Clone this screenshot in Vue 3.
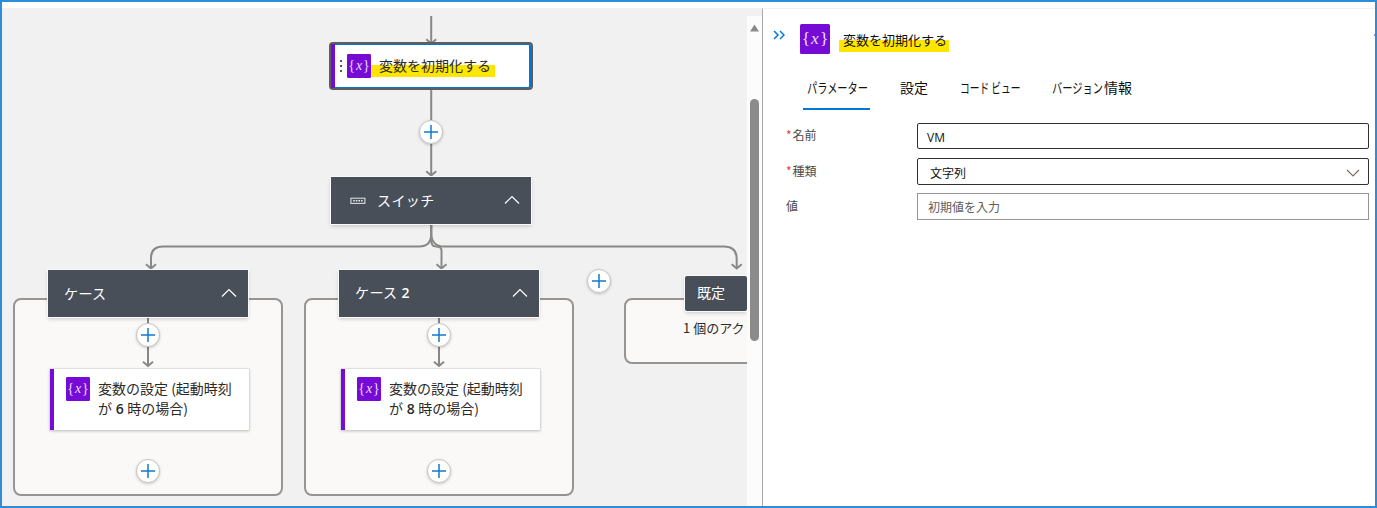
<script setup>
const containers = [
  { x: 13, y: 298, w: 270, h: 198 },
  { x: 304, y: 298, w: 270, h: 198 },
  { x: 624, y: 298, w: 240, h: 66 },
]
const headers = [
  { x: 331, y: 177, w: 200, h: 47, label: 'スイッチ', icon: true },
  { x: 48, y: 270, w: 200, h: 47, label: 'ケース' },
  { x: 339, y: 270, w: 200, h: 47, label: 'ケース', num: '2' },
]
const actions = [
  { x: 50, hour: '6' },
  { x: 341, hour: '8' },
]
const pluses = [[431, 132], [148, 335], [148, 471], [439, 335], [439, 471], [599, 281]]
const edges = [
  'M431.2 16V43', 'M431.2 90V175',
  'M431.2 224V234Q431.2 246.5 419 246.5H163Q151 246.5 151 258V268',
  'M431.2 224V240Q431.2 246.5 436 246.5Q441.5 246.5 441.5 250V268',
  'M431.2 224V234Q432 246.5 444 246.5H724Q736.7 246.5 736.7 259V268',
  'M148 317V365', 'M439 317V365',
]
const heads = [[431.2, 43.5], [431.2, 175.5], [151, 268.5], [441.5, 268.5], [736.7, 268.5], [148, 366], [439, 366]]
const place = (x, y, w, h) => ({ left: `${x - 2}px`, top: `${y - 8}px`, width: `${w}px`, height: `${h}px` })
</script>

<template>
  <div class="frame">
    <div class="strip"></div>
    <div class="body">
      <section class="canvas">
        <div v-for="(c, i) in containers" :key="'c' + i" class="group" :style="place(c.x, c.y, c.w, c.h)"></div>
        <svg class="edges" width="745" height="498" viewBox="2 8 745 498" fill="none" stroke="#898886" stroke-width="2">
          <path v-for="d in edges" :key="d" :d="d" />
          <path v-for="(h, i) in heads" :key="i" :d="`M${h[0] - 5} ${h[1] - 4.3}L${h[0]} ${h[1]}L${h[0] + 5} ${h[1] - 4.3}`" />
        </svg>

        <div class="card selected" :style="place(329, 42, 204, 48)">
          <i class="bar"></i>
          <svg class="grip" width="4" height="14" viewBox="0 0 4 14" fill="#555"><path d="M1 1h2v2H1zM1 6h2v2H1zM1 11h2v2H1z" /></svg>
          <svg class="var" width="24" height="24" viewBox="0 0 30 30"><rect width="30" height="30" rx="1.5" fill="#770bd6" /><text x="15" y="20" text-anchor="middle" class="vx">{<tspan class="ix" dx="1">x</tspan><tspan dx="1">}</tspan></text></svg>
          <span class="hl">変数を初期化する</span>
        </div>

        <div v-for="h in headers" :key="h.x" class="head" :style="place(h.x, h.y, h.w, h.h)">
          <svg v-if="h.icon" class="switch" width="16" height="8" viewBox="0 0 16 8"><rect x=".9" y="1.2" width="14" height="5.2" fill="none" stroke="#d9dbde" stroke-width="1.1" /><path d="M3.2 3.8h9.8" stroke="#e8e9eb" stroke-width="1.5" stroke-dasharray="1.6 1" /></svg>
          <span class="name" :class="{ wide: h.icon }">{{ h.label }}<b v-if="h.num">&nbsp;{{ h.num }}</b></span>
          <svg class="chev" width="16" height="10" viewBox="0 0 16 10" fill="none" stroke="#fff" stroke-width="1.2"><path d="M1 8.5L8 1.5L15 8.5" /></svg>
        </div>
        <div class="head mini" :style="place(685, 276, 62, 35)"><span>既定</span></div>
        <div class="count" :style="place(683, 318, 64, 20)">1 個のアク</div>

        <div v-for="a in actions" :key="a.x" class="card" :style="place(a.x, 369, 199, 61)">
          <i class="bar"></i>
          <svg class="var" width="24" height="24" viewBox="0 0 30 30"><rect width="30" height="30" rx="1.5" fill="#770bd6" /><text x="15" y="20" text-anchor="middle" class="vx">{<tspan class="ix" dx="1">x</tspan><tspan dx="1">}</tspan></text></svg>
          <p>変数の設定 (起動時刻<br>が <b>{{ a.hour }}</b> 時の場合)</p>
        </div>

        <div v-for="(p, i) in pluses" :key="'p' + i" class="plus" :style="place(p[0] - 12, p[1] - 12, 24, 24)">
          <svg width="14" height="14" viewBox="0 0 14 14" stroke="#1179cf" stroke-width="1.5"><path d="M7 0V14M0 7H14" /></svg>
        </div>
      </section>

      <div class="scroll">
        <svg class="up" width="9" height="8" viewBox="0 0 9 8"><path d="M4.5 0.5L9 7.5H0z" fill="#8a8a8a" /></svg>
        <div class="thumb"></div>
      </div>

      <aside class="panel">
        <header>
          <svg class="collapse" width="12" height="10" viewBox="0 0 12 10" fill="none" stroke="#0078d4" stroke-width="1.5"><path d="M1 1L5 5L1 9M7 1L11 5L7 9" /></svg>
          <svg class="logo" width="30" height="30" viewBox="0 0 30 30"><rect width="30" height="30" rx="1.5" fill="#770bd6" /><text x="15" y="20" text-anchor="middle" class="vx">{<tspan class="ix" dx="1">x</tspan><tspan dx="1">}</tspan></text></svg>
          <h1>変数を初期化する</h1>
          <i class="speck"></i>
        </header>
        <nav>
          <a class="on t1"><span class="k">パラメーター</span></a>
          <a class="t2">設定</a>
          <a class="t3"><span class="k">コード ビュー</span></a>
          <a class="t4"><span class="k">バージョン</span>情報</a>
        </nav>
        <form>
          <label class="first"><em>*</em>名前</label><div class="field vm">VM</div>
          <label><em>*</em>種類</label>
          <div class="field sel">文字列<svg width="14" height="8" viewBox="0 0 14 8" fill="none" stroke="#80695c" stroke-width="1.1"><path d="M1 1L7 7L13 1" /></svg></div>
          <label>値</label><div class="field hint">初期値を入力</div>
        </form>
      </aside>
    </div>
  </div>
</template>

<style>
body { margin: 0; background: #fff; }
</style>

<style scoped>
* { box-sizing: border-box; }
.frame { width: 1377px; height: 508px; border: 2px solid #2f8dd8; overflow: hidden; font-family: "Noto Sans CJK JP", "Noto Sans", sans-serif; font-size: 14px; color: #2b2a29; display: flex; flex-direction: column; background: #fff; }
.strip { height: 6px; flex: none; }
.body { flex: 1; display: grid; grid-template-columns: 745px 15px 1fr; min-height: 0; }
.canvas { position: relative; overflow: hidden; background: #f1f1f1; }
.edges { position: absolute; left: 0; top: 0; }
.group { position: absolute; border: 2px solid #969593; border-radius: 8px; background: #faf9f8; }
.head { position: absolute; display: flex; align-items: center; background: #484f59; color: #fff; box-shadow: 0 0 0 1px #fafafa, 0 2px 4px rgba(0,0,0,.2); line-height: 20px; }
.name { flex: 1; padding-left: 16px; padding-bottom: 2px; letter-spacing: .4px; }
.name.wide { padding-left: 11px; }
.switch { margin-left: 19px; }
.chev { margin-right: 11px; margin-bottom: 2px; }
.mini { padding: 0 0 3px 12px; border-radius: 2px; }
.count { position: absolute; white-space: nowrap; font-size: 13px; line-height: 20px; }
.card { position: absolute; display: flex; align-items: flex-start; background: #fff; box-shadow: 0 0 0 .5px #d0cfce, 0 1px 3px rgba(0,0,0,.25); }
.bar { align-self: stretch; width: 4px; background: #770bd6; flex: none; }
.card .var { margin: 8px 8px 0 12px; flex: none; }
.card p { margin: 9px 0 0; line-height: 20px; white-space: nowrap; }
b { font-family: "Open Sans", sans-serif; font-weight: 600; }
p b { margin: 0 .5px; }
.card.selected { align-items: center; border: 2px solid #605e5c; border-radius: 4px; box-shadow: inset 0 1px #0078d4, inset 0 -1px #0078d4, inset -2px 0 #0078d4; }
.card.selected .var { margin: 0; }
.grip { margin: 0 4px; width: 4px; flex: none; }
.hl { height: 24px; line-height: 22px; padding: 0 4px 0 8px; background: linear-gradient(#0000 11px, #ffe600 11px, #ffe600 23px, #0000 23px); white-space: nowrap; }
.vx { font-family: "Liberation Serif", serif; font-size: 17.5px; fill: #ecdcfa; }
.ix { font-style: italic; }
.plus { position: absolute; display: grid; place-items: center; background: #fff; border: 1px solid #c8c6c4; border-radius: 50%; box-shadow: 0 1px 3px rgba(0,0,0,.2); }
.scroll { background: #fcfcfc; border-top: 8px solid #f1f1f1; }
.up { display: block; margin: 8px 0 0 3px; }
.thumb { width: 9px; height: 242px; margin: 67px 0 0 3px; border-radius: 5px; background: #8b8b8b; }
.panel { border-left: 1px solid #a9a9a9; border-top: 1px solid #f1f1f1; background: #fff; color: #111; }
header { display: flex; height: 60px; padding: 15px 0 0 10px; }
.collapse { margin-top: 6px; }
.logo { margin-left: 15px; }
h1 { margin: 5px 0 0 9px; padding: 0 4px; height: 24px; font-size: 13px; font-weight: 400; line-height: 22px; width: 110px; white-space: nowrap; background: linear-gradient(#0000 11px, #ffe600 11px, #ffe600 23px, #0000 23px); }
.speck { margin: 10px 0 0 auto; width: 1px; height: 2px; background: #7e8fe0; }
nav { display: flex; margin-left: 40px; height: 41px; line-height: 37px; white-space: nowrap; }
nav a { height: 41px; }
.k { display: inline-block; transform-origin: 0 50%; transform: scaleX(.73); }
.t1 { width: 67px; padding-left: 4px; border-bottom: 2px solid #0078d4; }
.t2 { margin-left: 30px; width: 60px; }
.t3 { width: 92px; }
.t3 .k { transform: scaleX(.695); }
.t4 { display: flex; }
.t4 .k { width: 52px; }
form { display: grid; grid-template-columns: 131px 452px; margin: 13px 0 0 23px; grid-template-rows: 26px 27px 27px; row-gap: 8.5px; font-size: 12px; }
label { color: #4c4a48; line-height: 25px; }
.first { line-height: 24px; }
em { color: #e0393e; font-style: normal; margin-right: 1px; }
.field { border: 1px solid #323130; border-radius: 2px; display: flex; align-items: center; padding-left: 9px; }
.vm { font-family: "Open Sans", sans-serif; padding-top: 2px; }
.sel { padding: 2px 8px 0 12px; justify-content: space-between; }
.sel svg { margin-top: 2px; }
.hint { border-color: #979593; border-radius: 0; color: #605e5c; padding-left: 10px; }
</style>
